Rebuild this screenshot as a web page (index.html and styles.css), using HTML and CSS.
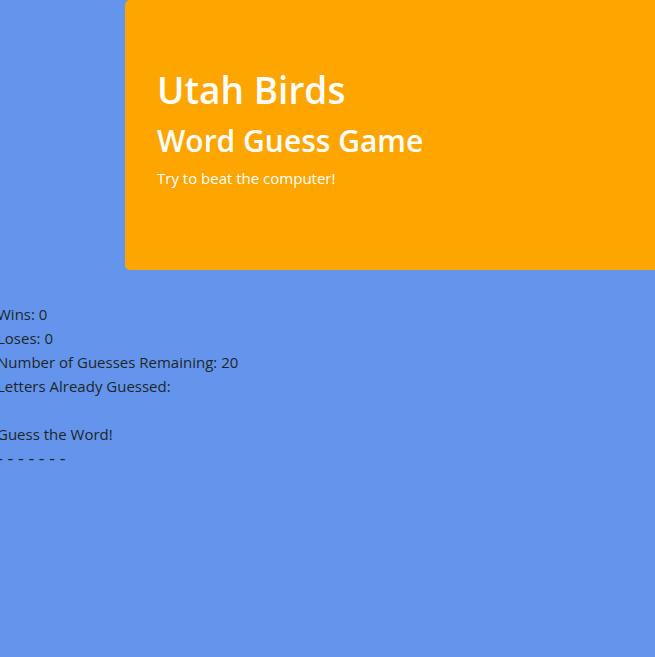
FILE: index.html
```html
<!DOCTYPE html>
<html lang="en">
<head>
<meta charset="utf-8">
<meta name="viewport" content="width=device-width, initial-scale=1">
<title>Utah Birds Word Guess Game</title>
<link rel="stylesheet" href="styles.css">
</head>
<body>
<header class="jumbotron">
<h1>Utah Birds</h1>
<h2>Word Guess Game</h2>
<p>Try to beat the computer!</p>
</header>
<main class="row">
<div>Wins: <span>0</span></div>
<div>Loses: <span>0</span></div>
<div>Number of Guesses Remaining: <span>20</span></div>
<div class="letters">Letters Already Guessed:</div>
<div>Guess the Word!</div>
<div class="word">- - - - - - -</div>
</main>
</body>
</html>
```
FILE: styles.css
```css
* {
  box-sizing: border-box;
}

body {
  margin: 0;
  overflow-x: hidden;
  background: cornflowerblue;
  color: #212529;
  font-family: "Segoe UI", "Open Sans", "Noto Sans", sans-serif;
  font-size: 15px;
  line-height: 24px;
}

.jumbotron {
  margin: 0 -5px 32px 125px;
  padding: 66px 32px 64px;
  border-radius: 5px;
  background: orange;
  color: white;
}

h1,
h2,
p {
  margin: 0;
}

h1 {
  margin-bottom: 8px;
  font-size: 37px;
  font-weight: 600;
  line-height: 48px;
}

h2 {
  margin-bottom: 6px;
  font-size: 30px;
  font-weight: 600;
  line-height: 38px;
}

.jumbotron p {
  margin-bottom: 16px;
}

.row {
  margin-left: -3px;
}

.letters {
  margin-bottom: 24px;
}

.word {
  font-size: 18px;
}
```
